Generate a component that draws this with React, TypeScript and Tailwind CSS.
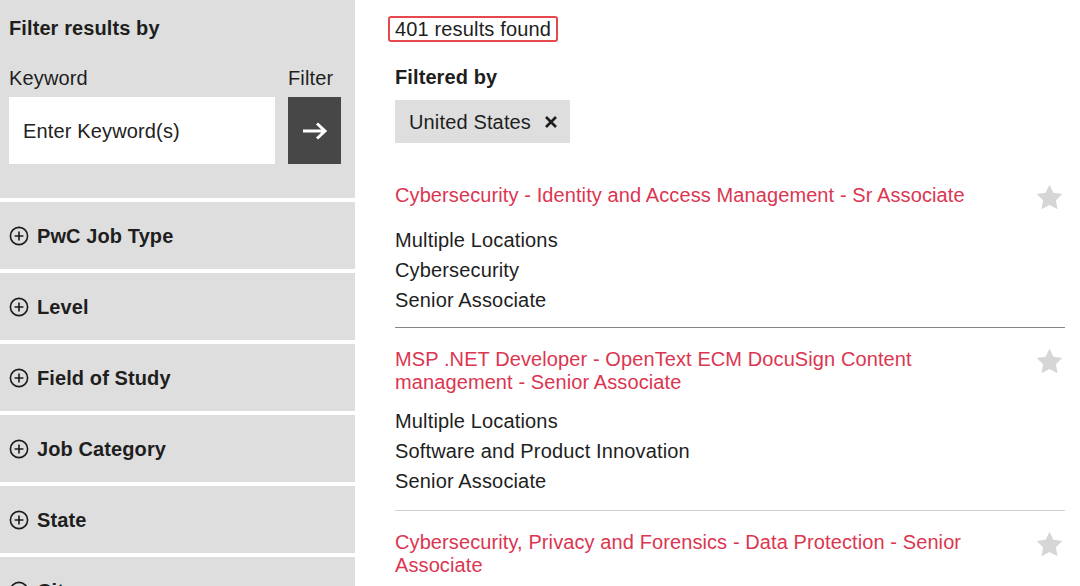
import { ReactNode } from "react";

const sections = ["PwC Job Type", "Level", "Field of Study", "Job Category", "State", "City"];

const jobs = [
  {
    title: "Cybersecurity - Identity and Access Management - Sr Associate",
    lines: ["Multiple Locations", "Cybersecurity", "Senior Associate"],
    line: "border-[#858585]",
  },
  {
    title: "MSP .NET Developer - OpenText ECM DocuSign Content management - Senior Associate",
    lines: ["Multiple Locations", "Software and Product Innovation", "Senior Associate"],
    line: "border-[#cfcfcf]",
  },
  {
    title: "Cybersecurity, Privacy and Forensics - Data Protection - Senior Associate",
    lines: ["Multiple Locations", "Cybersecurity", "Senior Associate"],
    line: "border-[#cfcfcf]",
  },
];

function PlusCircle() {
  return (
    <svg width="20" height="20" viewBox="0 0 20 20" className="shrink-0">
      <circle cx="10" cy="10" r="8.6" fill="none" stroke="#1a1a1a" strokeWidth="1.6" />
      <path d="M10 5.6v8.8M5.6 10h8.8" stroke="#1a1a1a" strokeWidth="1.6" />
    </svg>
  );
}

function Star() {
  return (
    <svg width="27" height="26" viewBox="0 0 24 23">
      <path
        d="M12 0.6l3.5 7.2 7.9 1.1-5.7 5.5 1.4 7.9L12 18.6l-7.1 3.7 1.4-7.9L0.6 8.9l7.9-1.1z"
        fill="#d6d6d6"
      />
    </svg>
  );
}

function Section({ children }: { children: ReactNode }) {
  return (
    <div className="bg-[#dedede] h-[67px] shrink-0 pl-[9px] flex items-center gap-[8px]">
      <PlusCircle />
      <span className="text-[20px] font-bold tracking-[0.1px]">{children}</span>
    </div>
  );
}

export default function App() {
  return (
    <div className="w-[1080px] h-[586px] overflow-hidden bg-white flex text-[#1e1e1e] tracking-[0.15px] font-['Liberation_Sans',Arial,sans-serif]">
      <aside className="w-[355px] shrink-0 flex flex-col gap-[4px]">
        <div className="bg-[#dedede] pt-4 pb-[34px] pl-[9px] pr-[14px]">
          <h2 className="text-[20px] leading-[24px] font-bold tracking-[0.1px]">Filter results by</h2>
          <div className="mt-[26px] flex gap-[13px]">
            <div className="flex-1">
              <div className="text-[20px] leading-[24px]">Keyword</div>
              <div className="mt-[7px] h-[67px] bg-white pl-[14px] flex items-center text-[20px] text-[#222]">
                Enter Keyword(s)
              </div>
            </div>
            <div className="w-[53px]">
              <div className="text-[20px] leading-[24px]">Filter</div>
              <div className="mt-[7px] h-[67px] bg-[#474747] flex items-center justify-center">
                <svg width="28" height="20" viewBox="0 0 28 20">
                  <path d="M2 10h22M16 2.5l8 7.5-8 7.5" fill="none" stroke="#fff" strokeWidth="3" />
                </svg>
              </div>
            </div>
          </div>
        </div>
        {sections.map((s) => (
          <Section key={s}>{s}</Section>
        ))}
      </aside>

      <main className="pl-[40px] pt-4 w-[710px]">
        <div className="-ml-[7px] w-fit flex items-center border-2 border-[#e5484d] rounded-[3px] px-[5px] h-[26px] text-[20px] leading-[22px]">
          401 results found
        </div>
        <h3 className="mt-[23px] text-[20px] leading-[24px] font-bold tracking-[0.1px]">Filtered by</h3>
        <div className="mt-[11px] w-fit flex items-center h-[43px] bg-[#dedede] pl-[14px] pr-[12px] gap-[13px] text-[20px]">
          <span>United States</span>
          <svg width="14" height="14" viewBox="0 0 14 14">
            <path d="M2 2l10 10M12 2L2 12" stroke="#1e1e1e" strokeWidth="2.6" />
          </svg>
        </div>

        <div className="mt-[41px] w-[670px]">
          {jobs.map((j, i) => (
            <div key={i} className={`border-b ${j.line} ${i > 0 ? "pt-[20px] pb-[14px]" : "pb-[12px]"}`}>
              <div className="flex justify-between items-start">
                <div className="max-w-[600px] text-[20px] leading-[23px] text-[#db3651] tracking-[0.1px]">{j.title}</div>
                <div className="h-[29px] pr-[2px]">
                  <Star />
                </div>
              </div>
              <div className="mt-[12px] text-[20px] leading-[30px]">
                {j.lines.map((l) => (
                  <div key={l}>{l}</div>
                ))}
              </div>
            </div>
          ))}
        </div>
      </main>
    </div>
  );
}
